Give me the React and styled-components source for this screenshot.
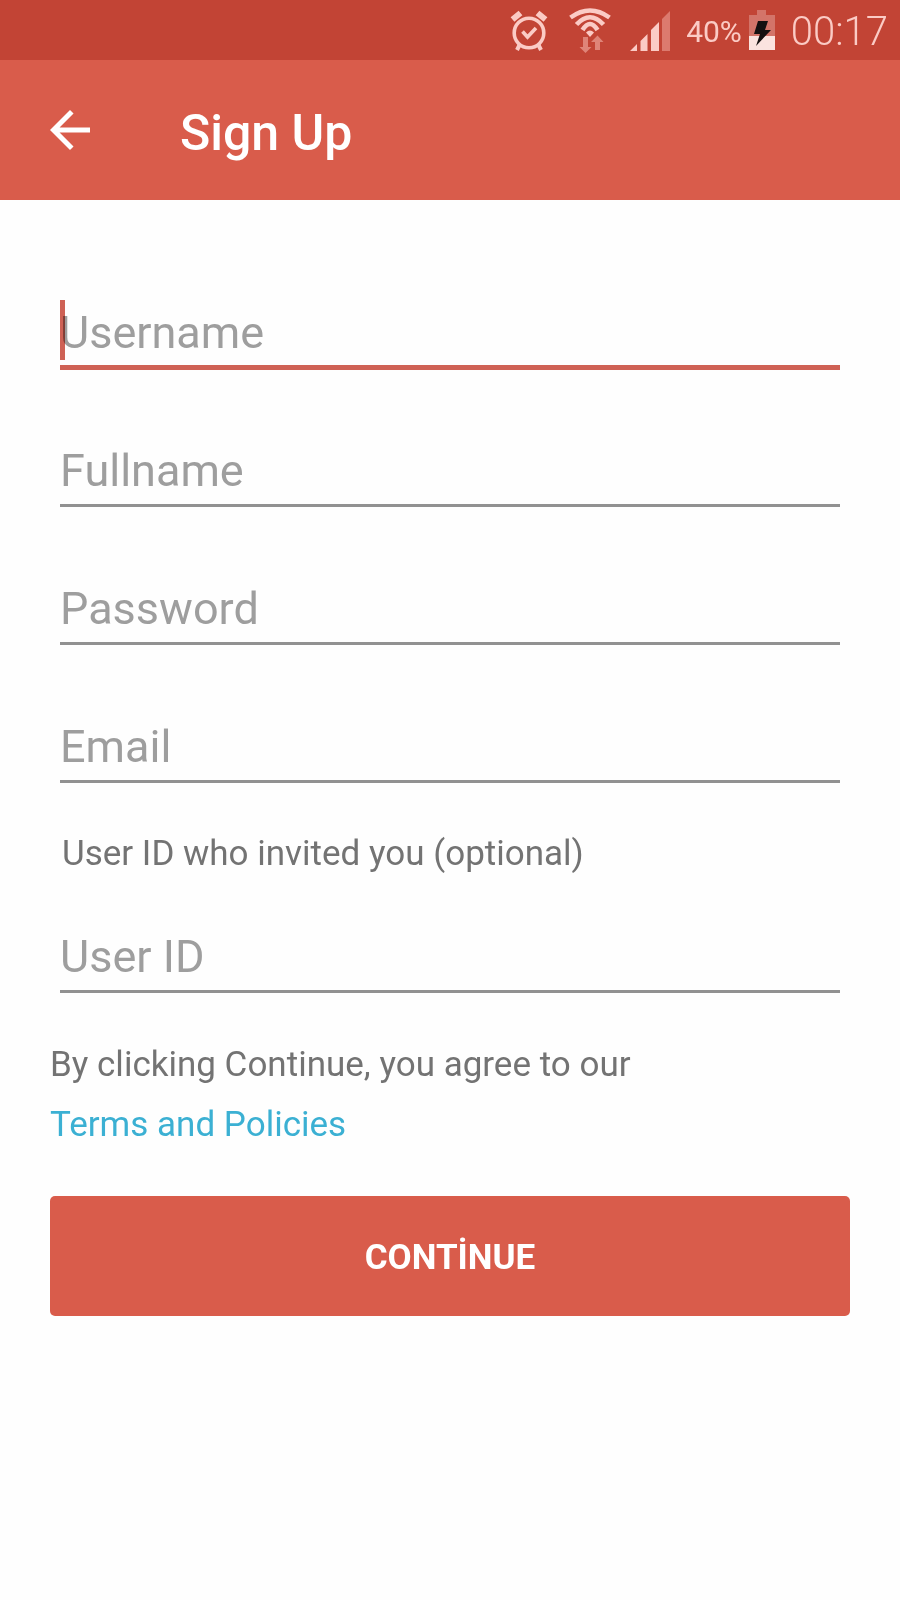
import { useState } from 'react';
import styled, { createGlobalStyle } from 'styled-components';

const GlobalStyle = createGlobalStyle`
    * {
        box-sizing: border-box;
    }
    body {
        margin: 0;
        background-color: #fefefe;
        font-family: Roboto, sans-serif;
    }
`;

const Container = styled.div`
    min-height: 100vh;
`;

const StatusBar = styled.div`
    display: flex;
    justify-content: flex-end;
    align-items: center;
    gap: 16px;
    height: 60px;
    padding: 0 12px;
    background-color: #c24435;
    color: #fbcbc5;
`;

const StatusGroup = styled.div`
    display: flex;
    align-items: center;
    gap: ${(props) => props.$gap};

    svg {
        display: block;
    }
`;

const StatusText = styled.span`
    padding-top: 4px;
    font-size: ${(props) => props.$size};
    font-weight: ${(props) => props.$weight};
    line-height: 60px;
`;

const AppBar = styled.header`
    display: flex;
    align-items: center;
    gap: 80px;
    height: 140px;
    padding: 0 40px;
    background-color: #d95c4b;
    color: white;
`;

const BackBtn = styled.button`
    all: unset;
    display: flex;
    cursor: pointer;
`;

const Title = styled.h1`
    margin: 0;
    padding-top: 6px;
    font-size: 50px;
    font-weight: 500;
    line-height: 60px;
`;

const Form = styled.form`
    padding: 100px 50px;
`;

const Fields = styled.div`
    display: flex;
    flex-direction: column;
    gap: 68px;
    padding: 0 10px;
`;

const Field = styled.div`
    position: relative;
    height: 70px;
`;

const Input = styled.input`
    display: block;
    width: 100%;
    height: ${(props) => (props.$active ? '70px' : '69px')};
    padding: 4px 0 ${(props) => (props.$active ? '4px' : '5px')};
    border: 0;
    border-bottom: ${(props) => (props.$active ? '5px solid #cf6155' : '3px solid #919191')};
    border-radius: 0;
    outline: none;
    background: transparent;
    color: #333;
    font-family: inherit;
    font-size: 45px;
    caret-color: ${(props) => (props.value ? '#cf6155' : 'transparent')};

    &::placeholder {
        color: #9e9e9e;
        opacity: 1;
    }
`;

// thick cursor, shown over the hint while the field is empty
const Cursor = styled.span`
    position: absolute;
    top: 0;
    left: 0;
    width: 5px;
    height: 60px;
    background-color: #cf6155;
    mix-blend-mode: multiply;
    pointer-events: none;
`;

const InviteLabel = styled.label`
    display: block;
    padding: 0 12px;
    margin: 49px 0;
    color: #737373;
    font-size: 35px;
    line-height: 42px;
`;

const Agreement = styled.p`
    margin: 41px 0;
    color: #737373;
    font-size: 35px;
    line-height: 60px;
`;

const TermsLink = styled.a`
    display: table;
    color: #3bb0d3;
    text-decoration: none;
`;

const ContinueBtn = styled.button`
    display: block;
    width: 100%;
    height: 120px;
    padding: 2px 0 0;
    border: 0;
    border-radius: 5px;
    background-color: #d95c4b;
    color: white;
    font-family: inherit;
    font-size: 35px;
    font-weight: 700;
    cursor: pointer;
`;

function AlarmIcon() {
    return (
        <svg width="38" height="42" viewBox="0 0 38 42" fill="none" stroke="currentColor">
            <circle cx="19" cy="24" r="14.8" strokeWidth="3.6" />
            <path d="M12.5 22.5l5 5.5 8.5-9" strokeWidth="3.6" />
            <path d="M2.5 10.5L10.5 4M35.5 10.5L27.5 4" strokeWidth="6" />
            <path d="M9.5 36l-2.5 5M28.5 36l2.5 5" strokeWidth="4" />
        </svg>
    );
}

function WifiIcon() {
    return (
        <svg width="44" height="46" viewBox="-2 0 44 46" fill="none" stroke="currentColor">
            <path d="M1.5 10.5Q21-3.5 40.5 10.5" strokeWidth="4.6" />
            <path d="M7.5 17.5Q21 3 34.5 17.5" strokeWidth="4.6" />
            <path d="M13.5 23Q21 11 28.5 23" strokeWidth="4.6" />
            <path d="M17 25.5Q21 21.5 25 25.5L21 30z" fill="currentColor" stroke="none" />
            <path
                d="M14 30h5v10h3.5L16.5 46 10.5 40H14zM26 43V35h-4l6.500-6.500L34.500 35H31v8z"
                fill="#df8478"
                stroke="none"
            />
        </svg>
    );
}

function SignalIcon() {
    return (
        <svg width="40" height="41" viewBox="0 0 40 41" fill="currentColor">
            <path d="M0 41l7-7v7zM10.5 31l7-7v17h-7zM21 20l8-8v29h-8z" />
            <path d="M32 9l8-8v40h-8z" fill="#dc7a6e" />
        </svg>
    );
}

function BatteryIcon() {
    return (
        <svg width="26" height="40" viewBox="0 0 26 40">
            <path d="M8 0h9v5h9v21H0V5h8z" fill="#d37469" />
            <path d="M0 26h26v14H0z" fill="#fbe3df" />
            <path d="M9 11h10l-3 9h6L7 36l4-12H5z" fill="#151010" />
        </svg>
    );
}

function BackIcon() {
    return (
        <svg width="60" height="60" viewBox="0 0 24 24" fill="currentColor">
            <path d="M20 11H7.83l5.59-5.59L12 4l-8 8 8 8 1.41-1.41L7.83 13H20v-2z" />
        </svg>
    );
}

const fields = [
    { name: 'username', label: 'Username', type: 'text' },
    { name: 'fullname', label: 'Fullname', type: 'text' },
    { name: 'password', label: 'Password', type: 'password' },
    { name: 'email', label: 'Email', type: 'email' },
];

export default function App() {
    const [active, setActive] = useState('username');
    const [values, setValues] = useState({});

    const renderField = ({ name, label, type }) => (
        <Field key={name}>
            <Input
                id={name}
                name={name}
                type={type}
                placeholder={label}
                aria-label={name === 'userid' ? undefined : label}
                value={values[name] || ''}
                $active={active === name}
                onFocus={() => setActive(name)}
                onChange={(e) => setValues({ ...values, [name]: e.target.value })}
            />
            {active === name && !values[name] && <Cursor />}
        </Field>
    );

    return (
        <Container>
            <GlobalStyle />
            <StatusBar>
                <StatusGroup $gap="19px">
                    <AlarmIcon />
                    <WifiIcon />
                    <SignalIcon />
                </StatusGroup>
                <StatusGroup $gap="7px">
                    <StatusText $size="30px" $weight="400">40%</StatusText>
                    <BatteryIcon />
                </StatusGroup>
                <StatusText $size="40px" $weight="300">00:17</StatusText>
            </StatusBar>
            <AppBar>
                <BackBtn type="button" aria-label="Back">
                    <BackIcon />
                </BackBtn>
                <Title>Sign Up</Title>
            </AppBar>
            <Form onSubmit={(e) => e.preventDefault()}>
                <Fields>{fields.map(renderField)}</Fields>
                <InviteLabel htmlFor="userid">User ID who invited you (optional)</InviteLabel>
                <Fields>{renderField({ name: 'userid', label: 'User ID', type: 'text' })}</Fields>
                <Agreement>
                    By clicking Continue, you agree to our
                    <TermsLink href="#terms">Terms and Policies</TermsLink>
                </Agreement>
                <ContinueBtn type="submit">CONTİNUE</ContinueBtn>
            </Form>
        </Container>
    );
}
